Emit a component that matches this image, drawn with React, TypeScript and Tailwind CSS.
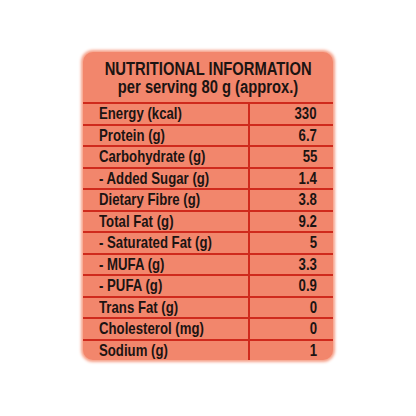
import React from "react";

const rows: [string, string][] = [
  ["Energy (kcal)", "330"],
  ["Protein (g)", "6.7"],
  ["Carbohydrate (g)", "55"],
  ["- Added Sugar (g)", "1.4"],
  ["Dietary Fibre (g)", "3.8"],
  ["Total Fat (g)", "9.2"],
  ["- Saturated Fat (g)", "5"],
  ["- MUFA (g)", "3.3"],
  ["- PUFA (g)", "0.9"],
  ["Trans Fat (g)", "0"],
  ["Cholesterol (mg)", "0"],
  ["Sodium (g)", "1"],
];

export default function App() {
  return (
    <div
      className="w-[416px] h-[416px] bg-white pt-[52px] pl-[83px]"
      style={{ fontFamily: '"Liberation Sans", Arial, sans-serif' }}
    >
      <div className="w-[250px] h-[308px] bg-[#f2866c] rounded-[10px] shadow-[0_0_3px_2px_#f6a088] overflow-hidden text-[#1c1412]">
        <div className="h-[50px] pt-[8px] flex flex-col items-center font-bold whitespace-nowrap">
          <div className="h-[18px] text-[18px] leading-[18px] scale-x-[0.82] origin-center">NUTRITIONAL INFORMATION</div>
          <div className="h-[18px] text-[18px] leading-[18px] scale-x-[0.82] origin-center">per serving 80 g (approx.)</div>
        </div>
        {rows.map(([label, value]) => (
          <div key={label} className="flex h-[21.5px] border-t-2 border-[#cf2a1d]">
            <div className="w-[165px] pl-[16px] text-[16.5px] leading-[19px] font-bold whitespace-nowrap">
              <span className="inline-block scale-x-[0.8] origin-left">{label}</span>
            </div>
            <div className="flex-1 border-l-2 border-[#cf2a1d] pr-[16px] text-right text-[16.5px] leading-[19px] font-bold">
              <span className="inline-block scale-x-[0.8] origin-right">{value}</span>
            </div>
          </div>
        ))}
      </div>
    </div>
  );
}
